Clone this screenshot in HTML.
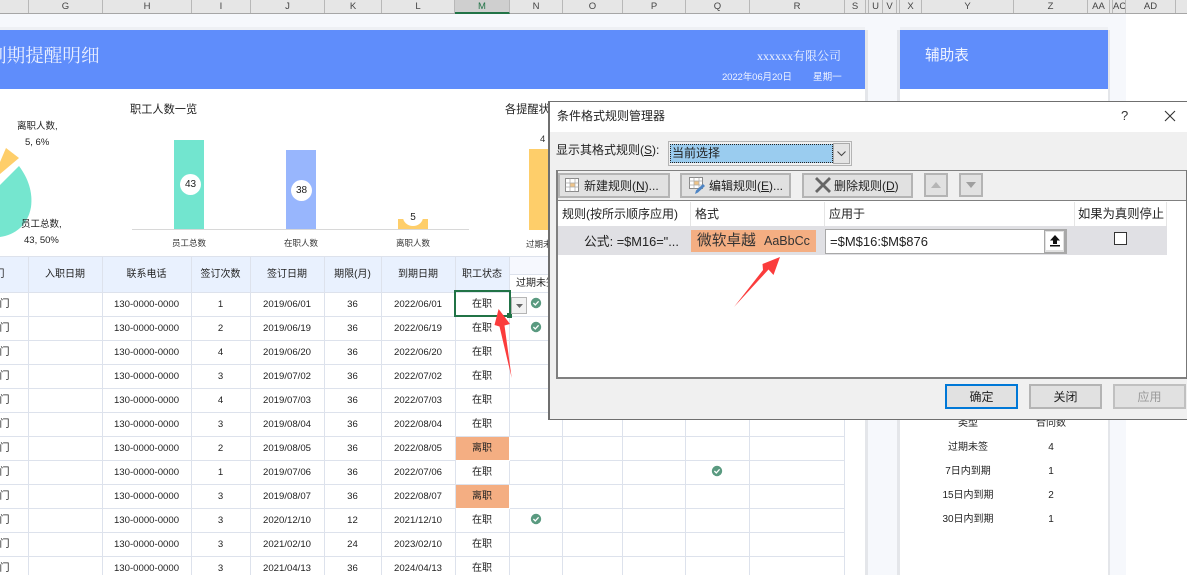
<!DOCTYPE html>
<html><head><meta charset="utf-8">
<style>
html,body{margin:0;padding:0;width:1187px;height:575px;overflow:hidden;background:#fff}
body{position:relative;font-family:"Liberation Sans","Noto Sans CJK SC",sans-serif;color:#222}
.a{position:absolute;white-space:nowrap}
.c{position:absolute;top:0;height:13px;line-height:14px;font-size:9.5px;text-align:center;color:#444;border-right:1px solid #b8b8b8;box-sizing:border-box;overflow:hidden}
table{position:absolute;left:-1px;top:256px;border-collapse:collapse;table-layout:fixed;width:845px;font-size:9.6px;line-height:14px;color:#222}
td{border-right:1px solid #dde2ec;border-bottom:1px solid #dde2ec;height:23px;padding:0;text-align:center;overflow:hidden;white-space:nowrap;box-sizing:content-box}
tr.h td{height:35px;background:#e9f1fe;font-size:10px;border-top:1px solid #dde2ec}
td.f{direction:rtl;text-align:right;padding-right:18px;font-size:10px}
tr.h td.f{padding-right:23px}
td.m{font-size:10px}
td.o{background:#f4ae82;border-bottom:1px solid #fff;border-right:1px solid #fff;font-size:10px}
.aux{font-size:10px;color:#222;text-align:center;transform:translateX(-50%)}
.btn{position:absolute;background:#e1e1e1;border:2px solid #b4b4b4;box-sizing:border-box;font-size:12px;color:#222;text-align:center;white-space:nowrap}
u{text-decoration:underline}
</style></head><body>

<!-- column headers -->
<div class="a" style="left:0;top:0;width:1187px;height:14px;background:#e6e6e6;border-bottom:1px solid #a6a6a6;box-sizing:border-box"></div>
<div class="c" style="left:0;width:29px"></div>
<div class="c" style="left:29px;width:74px">G</div>
<div class="c" style="left:103px;width:89px">H</div>
<div class="c" style="left:192px;width:59px">I</div>
<div class="c" style="left:251px;width:74px">J</div>
<div class="c" style="left:325px;width:57px">K</div>
<div class="c" style="left:382px;width:73px">L</div>
<div class="c" style="left:455px;width:55px;background:#cfcfcf;border-bottom:2px solid #217346;color:#217346;height:14px">M</div>
<div class="c" style="left:510px;width:53px">N</div>
<div class="c" style="left:563px;width:60px">O</div>
<div class="c" style="left:623px;width:63px">P</div>
<div class="c" style="left:686px;width:64px">Q</div>
<div class="c" style="left:750px;width:95px">R</div>
<div class="c" style="left:845px;width:21px">S</div>
<div class="c" style="left:866px;width:3px"></div>
<div class="c" style="left:869px;width:14px">U</div>
<div class="c" style="left:883px;width:14px">V</div>
<div class="c" style="left:897px;width:3px"></div>
<div class="c" style="left:900px;width:22px">X</div>
<div class="c" style="left:922px;width:92px">Y</div>
<div class="c" style="left:1014px;width:74px">Z</div>
<div class="c" style="left:1088px;width:22px">AA</div>
<div class="c" style="left:1110px;width:3px"></div>
<div class="c" style="left:1113px;width:13px">AC</div>
<div class="c" style="left:1126px;width:50px">AD</div>

<!-- page background -->
<div class="a" style="left:0;top:14px;width:1126px;height:561px;background:#f6f8fc"></div>
<div class="a" style="left:0;top:27px;width:865px;height:3px;background:#eef0f4"></div>
<div class="a" style="left:900px;top:27px;width:208px;height:3px;background:#eef0f4"></div>
<div class="a" style="left:0;top:89px;width:865px;height:486px;background:#fff"></div>
<div class="a" style="left:865px;top:30px;width:3px;height:545px;background:#e4e6ea"></div>
<div class="a" style="left:897px;top:30px;width:3px;height:545px;background:#e4e6ea"></div>
<div class="a" style="left:900px;top:89px;width:208px;height:486px;background:#fff"></div>
<div class="a" style="left:1108px;top:30px;width:2px;height:545px;background:#e4e6ea"></div>

<!-- banners -->
<div class="a" style="left:0;top:30px;width:865px;height:59px;background:#5f8dfb"></div>
<div class="a" style="left:900px;top:30px;width:208px;height:59px;background:#5f8dfb"></div>
<div class="a" style="left:-12px;top:42px;font:18.6px/30px 'Liberation Serif','Noto Serif CJK SC',serif;color:#e8eeff">到期提醒明细</div>
<div class="a" style="left:757px;top:47px;font:12px/18px 'Liberation Serif','Noto Serif CJK SC',serif;color:#f0f4ff">xxxxxx有限公司</div>
<div class="a" style="left:722px;top:70px;font-size:9.6px;letter-spacing:-.15px;line-height:15px;color:#eef2ff">2022年06月20日</div>
<div class="a" style="left:813px;top:70px;font-size:9.6px;line-height:15px;color:#eef2ff">星期一</div>
<div class="a" style="left:925px;top:46px;font-size:14.6px;line-height:21px;color:#f0f4ff">辅助表</div>

<!-- charts -->
<div class="a" style="left:130px;top:102px;font-size:11.2px;line-height:16px;color:#222">职工人数一览</div>
<div class="a" style="left:505px;top:102px;font-size:11.2px;line-height:16px;color:#222">各提醒状态</div>
<svg class="a" style="left:0;top:110px" width="70" height="140">
<path d="M0 52 L6 38 L19 48 L0 64Z" fill="#fece6a"/>
<path d="M0 75 L19 56 C28 68 33 82 31 97 C28 115 15 125 0 127Z" fill="#75e6cf"/>
</svg>
<div class="a" style="left:17px;top:120px;font-size:9.5px;line-height:14px;color:#222">离职人数,</div>
<div class="a" style="left:25px;top:136px;font-size:9.5px;line-height:14px;color:#222">5, 6%</div>
<div class="a" style="left:21px;top:218px;font-size:9.5px;line-height:14px;color:#222">员工总数,</div>
<div class="a" style="left:24px;top:234px;font-size:9.5px;line-height:14px;color:#222">43, 50%</div>
<div class="a" style="left:174px;top:140px;width:30px;height:89px;background:#72e5cf"></div>
<div class="a" style="left:286px;top:150px;width:30px;height:79px;background:#98b6fd"></div>
<div class="a" style="left:398px;top:219px;width:30px;height:10px;background:#fece6a"></div>
<div class="a" style="left:529px;top:149px;width:20px;height:81px;background:#fece6a"></div>
<div class="a" style="left:180px;top:174px;width:21px;height:21px;border-radius:50%;background:#fff;text-align:center;font-size:10px;line-height:21px">43</div>
<div class="a" style="left:291px;top:180px;width:21px;height:21px;border-radius:50%;background:#fff;text-align:center;font-size:10px;line-height:21px">38</div>
<div class="a" style="left:403px;top:208px;width:20px;height:18px;border-radius:50%;background:#fff;text-align:center;font-size:10px;line-height:20px">5</div>
<div class="a" style="left:132px;top:229px;width:337px;height:1px;background:#d8d8d8"></div>
<div class="a" style="left:172px;top:236px;font-size:8.5px;line-height:14px;color:#333">员工总数</div>
<div class="a" style="left:284px;top:236px;font-size:8.5px;line-height:14px;color:#333">在职人数</div>
<div class="a" style="left:396px;top:236px;font-size:8.5px;line-height:14px;color:#333">离职人数</div>
<div class="a" style="left:526px;top:237px;font-size:8.5px;line-height:14px;color:#333">过期未签</div>
<div class="a" style="left:540px;top:133px;font-size:9.5px;line-height:13px;color:#333">4</div>

<!-- table -->
<table>
<colgroup><col style="width:29px"><col style="width:74px"><col style="width:89px"><col style="width:59px"><col style="width:74px"><col style="width:57px"><col style="width:74px"><col style="width:54px"><col style="width:53px"><col style="width:60px"><col style="width:63px"><col style="width:64px"><col style="width:95px"></colgroup>
<tr class="h"><td class="f">部门</td><td>入职日期</td><td>联系电话</td><td>签订次数</td><td>签订日期</td><td>期限(月)</td><td>到期日期</td><td>职工状态</td><td style="background:#f6f8fe" colspan="5"></td></tr>
<tr><td class="f">部门</td><td></td><td>130-0000-0000</td><td>1</td><td>2019/06/01</td><td>36</td><td>2022/06/01</td><td class="m">在职</td><td></td><td></td><td></td><td></td><td></td></tr>
<tr><td class="f">部门</td><td></td><td>130-0000-0000</td><td>2</td><td>2019/06/19</td><td>36</td><td>2022/06/19</td><td class="m">在职</td><td></td><td></td><td></td><td></td><td></td></tr>
<tr><td class="f">部门</td><td></td><td>130-0000-0000</td><td>4</td><td>2019/06/20</td><td>36</td><td>2022/06/20</td><td class="m">在职</td><td></td><td></td><td></td><td></td><td></td></tr>
<tr><td class="f">部门</td><td></td><td>130-0000-0000</td><td>3</td><td>2019/07/02</td><td>36</td><td>2022/07/02</td><td class="m">在职</td><td></td><td></td><td></td><td></td><td></td></tr>
<tr><td class="f">部门</td><td></td><td>130-0000-0000</td><td>4</td><td>2019/07/03</td><td>36</td><td>2022/07/03</td><td class="m">在职</td><td></td><td></td><td></td><td></td><td></td></tr>
<tr><td class="f">部门</td><td></td><td>130-0000-0000</td><td>3</td><td>2019/08/04</td><td>36</td><td>2022/08/04</td><td class="m">在职</td><td></td><td></td><td></td><td></td><td></td></tr>
<tr><td class="f">部门</td><td></td><td>130-0000-0000</td><td>2</td><td>2019/08/05</td><td>36</td><td>2022/08/05</td><td class="o">离职</td><td></td><td></td><td></td><td></td><td></td></tr>
<tr><td class="f">部门</td><td></td><td>130-0000-0000</td><td>1</td><td>2019/07/06</td><td>36</td><td>2022/07/06</td><td class="m">在职</td><td></td><td></td><td></td><td></td><td></td></tr>
<tr><td class="f">部门</td><td></td><td>130-0000-0000</td><td>3</td><td>2019/08/07</td><td>36</td><td>2022/08/07</td><td class="o">离职</td><td></td><td></td><td></td><td></td><td></td></tr>
<tr><td class="f">部门</td><td></td><td>130-0000-0000</td><td>3</td><td>2020/12/10</td><td>12</td><td>2021/12/10</td><td class="m">在职</td><td></td><td></td><td></td><td></td><td></td></tr>
<tr><td class="f">部门</td><td></td><td>130-0000-0000</td><td>3</td><td>2021/02/10</td><td>24</td><td>2023/02/10</td><td class="m">在职</td><td></td><td></td><td></td><td></td><td></td></tr>
<tr><td class="f">部门</td><td></td><td>130-0000-0000</td><td>3</td><td>2021/04/13</td><td>36</td><td>2024/04/13</td><td class="m">在职</td><td></td><td></td><td></td><td></td><td></td></tr>
</table>
<div class="a" style="left:510px;top:274px;width:60px;height:17px;background:#fff;border-top:1px solid #dde2ec"></div>
<div class="a" style="left:516px;top:277px;font-size:10px;line-height:14px">过期未签</div>

<!-- checks -->
<svg class="a" style="left:530px;top:297px" width="12" height="12"><circle cx="6" cy="6" r="5.200" fill="#5a9a80"/><path d="M3.400 6 L5.300 7.900 L8.600 4.300" fill="none" stroke="#fff" stroke-width="1.300"/></svg>
<svg class="a" style="left:530px;top:321px" width="12" height="12"><circle cx="6" cy="6" r="5.200" fill="#5a9a80"/><path d="M3.400 6 L5.300 7.900 L8.600 4.300" fill="none" stroke="#fff" stroke-width="1.300"/></svg>
<svg class="a" style="left:530px;top:513px" width="12" height="12"><circle cx="6" cy="6" r="5.200" fill="#5a9a80"/><path d="M3.400 6 L5.300 7.900 L8.600 4.300" fill="none" stroke="#fff" stroke-width="1.300"/></svg>
<svg class="a" style="left:711px;top:465px" width="12" height="12"><circle cx="6" cy="6" r="5.200" fill="#5a9a80"/><path d="M3.400 6 L5.300 7.900 L8.600 4.300" fill="none" stroke="#fff" stroke-width="1.300"/></svg>

<!-- selected cell -->
<div class="a" style="left:454px;top:290px;width:57px;height:27px;border:2px solid #217346;box-sizing:border-box"></div>
<div class="a" style="left:507px;top:313px;width:5px;height:5px;background:#217346;border:0"></div>
<div class="a" style="left:511px;top:297px;width:16px;height:17px;background:#f2f2f2;border:1px solid #b5b5b5;box-sizing:border-box"></div>
<svg class="a" style="left:515px;top:303px" width="9" height="6"><path d="M1 1H8L4.500 5Z" fill="#666"/></svg>

<!-- aux table -->
<div class="a aux" style="left:968px;top:417px;line-height:14px">类型</div>
<div class="a aux" style="left:1051px;top:417px;line-height:14px">合同数</div>
<div class="a aux" style="left:968px;top:441px;line-height:14px">过期未签</div>
<div class="a aux" style="left:1051px;top:441px;line-height:14px">4</div>
<div class="a aux" style="left:968px;top:465px;line-height:14px">7日内到期</div>
<div class="a aux" style="left:1051px;top:465px;line-height:14px">1</div>
<div class="a aux" style="left:968px;top:489px;line-height:14px">15日内到期</div>
<div class="a aux" style="left:1051px;top:489px;line-height:14px">2</div>
<div class="a aux" style="left:968px;top:513px;line-height:14px">30日内到期</div>
<div class="a aux" style="left:1051px;top:513px;line-height:14px">1</div>

<!-- dialog -->
<div class="a" style="left:548px;top:101px;width:640px;height:319px;background:#f0f0f0;border:1px solid #6f6f6f;border-left-width:2px;border-right:0;box-sizing:border-box"></div>
<div class="a" style="left:550px;top:102px;width:637px;height:30px;background:#fff"></div>
<div class="a" style="left:557px;top:107px;font-size:12px;line-height:18px;color:#222">条件格式规则管理器</div>
<div class="a" style="left:1121px;top:107px;font-size:13px;line-height:18px;color:#333">?</div>
<svg class="a" style="left:1163px;top:109px" width="14" height="14"><path d="M2 2L12 12M12 2L2 12" stroke="#333" stroke-width="1.100" fill="none"/></svg>
<div class="a" style="left:556px;top:141px;font-size:12px;line-height:18px;color:#222">显示其格式规则(<u>S</u>):</div>
<div class="a" style="left:668px;top:141px;width:184px;height:25px;background:#f0f0f0;border:1px solid #b4b4b4;box-sizing:border-box"></div>
<div class="a" style="left:670px;top:144px;width:163px;height:19px;background:#9accef;border:1px dotted #222;box-sizing:border-box;font-size:12px;line-height:17px;padding-left:1px;color:#222">当前选择</div>
<div class="a" style="left:833px;top:143px;width:17px;height:21px;background:#e4e4e4;border:1px solid #aaa;box-sizing:border-box"></div>
<svg class="a" style="left:836px;top:150px" width="11" height="8"><path d="M1.500 1.500L5.500 5.500L9.500 1.500" stroke="#444" fill="none"/></svg>

<div class="a" style="left:556px;top:170px;width:631px;height:209px;border:1px solid #808080;border-left-width:2px;border-bottom-width:2px;border-right:0;box-sizing:border-box;background:#f0f0f0"></div>
<div class="a" style="left:556px;top:200px;width:631px;height:1px;background:#808080"></div>
<div class="a" style="left:558px;top:201px;width:628px;height:176px;background:#fff"></div>
<div class="a" style="left:1186px;top:170px;width:1px;height:209px;background:#777"></div>

<div class="btn" style="left:558px;top:173px;width:112px;height:25px;line-height:22px;padding-left:24px;text-align:left">新建规则(<u>N</u>)...</div>
<svg class="a" style="left:565px;top:178px" width="15" height="15"><rect x=".5" y=".5" width="13" height="13" fill="#fff" stroke="#8a8a8a"/><rect x="5" y="5" width="5" height="4" fill="#eec48a"/><path d="M.5 5H13.500M.5 9H13.500M5 .5V13.500M10 .5V13.500" stroke="#a8a8a8" stroke-width=".7"/></svg>
<div class="btn" style="left:680px;top:173px;width:111px;height:25px;line-height:22px;padding-left:27px;text-align:left">编辑规则(<u>E</u>)...</div>
<svg class="a" style="left:689px;top:177px" width="18" height="18"><rect x=".5" y=".5" width="13" height="11" fill="#fff" stroke="#8a8a8a"/><rect x="5" y="4" width="5" height="4" fill="#eec48a"/><path d="M.5 4H13.500M.5 8H13.500M5 .5V11.500M10 .5V11.500" stroke="#a8a8a8" stroke-width=".7"/><path d="M6 17L7 13.500L14 7L16 9L9 15.500Z" fill="#4d84c4"/></svg>
<div class="btn" style="left:802px;top:173px;width:111px;height:25px;line-height:22px;padding-left:30px;text-align:left">删除规则(<u>D</u>)</div>
<svg class="a" style="left:814px;top:176px" width="18" height="18"><path d="M2 2L16 16M16 2L2 16" stroke="#666" stroke-width="2.800" fill="none"/></svg>
<div class="btn" style="left:924px;top:173px;width:24px;height:24px"></div>
<svg class="a" style="left:930px;top:181px" width="12" height="8"><path d="M1 7H11L6 1Z" fill="#b5b5b5"/></svg>
<div class="btn" style="left:959px;top:173px;width:24px;height:24px"></div>
<svg class="a" style="left:965px;top:181px" width="12" height="8"><path d="M1 1H11L6 7Z" fill="#9f9f9f"/></svg>

<div class="a" style="left:562px;top:205px;font-size:12px;line-height:18px;color:#222">规则(按所示顺序应用)</div>
<div class="a" style="left:695px;top:205px;font-size:12px;line-height:18px;color:#222">格式</div>
<div class="a" style="left:829px;top:205px;font-size:12px;line-height:18px;color:#222">应用于</div>
<div class="a" style="left:1078px;top:205px;font-size:12.300px;line-height:18px;color:#222">如果为真则停止</div>
<div class="a" style="left:690px;top:202px;width:1px;height:24px;background:#e5e5e5"></div>
<div class="a" style="left:824px;top:202px;width:1px;height:24px;background:#e5e5e5"></div>
<div class="a" style="left:1074px;top:202px;width:1px;height:24px;background:#e5e5e5"></div>
<div class="a" style="left:1166px;top:202px;width:1px;height:24px;background:#e5e5e5"></div>

<div class="a" style="left:558px;top:226px;width:609px;height:29px;background:#e0e0e4"></div>
<div class="a" style="left:584px;top:233px;font-size:12.800px;line-height:17px;color:#222">公式: =$M16="...</div>
<div class="a" style="left:691px;top:230px;width:125px;height:22px;background:#f4ae82"></div>
<div class="a" style="left:697px;top:231px;font-size:14.700px;line-height:20px;color:#333">微软卓越</div>
<div class="a" style="left:764px;top:231px;font-size:12.500px;line-height:20px;color:#333">AaBbCc</div>
<div class="a" style="left:825px;top:229px;width:242px;height:25px;background:#fff;border:1px solid #a8a8a8;box-sizing:border-box;font-size:13px;line-height:23px;padding-left:4px;color:#222">=$M$16:$M$876</div>
<div class="a" style="left:1044px;top:229px;width:23px;height:25px;background:#a8a8a8"></div>
<div class="a" style="left:1045px;top:231px;width:19px;height:21px;background:#e1e1e1"></div>
<div class="a" style="left:1046px;top:232px;width:17px;height:18px;background:#fff"></div>
<svg class="a" style="left:1048px;top:234px" width="14" height="14"><path d="M7 1L12 6.500H9V10H5V6.500H2Z" fill="#111"/><rect x="2" y="11" width="10" height="1.500" fill="#111"/></svg>
<div class="a" style="left:1114px;top:232px;width:13px;height:13px;background:#fff;border:1px solid #333;box-sizing:border-box"></div>

<div class="btn" style="left:945px;top:384px;width:73px;height:25px;border:2px solid #0078d7;line-height:22px">确定</div>
<div class="btn" style="left:1029px;top:384px;width:73px;height:25px;line-height:22px">关闭</div>
<div class="btn" style="left:1113px;top:384px;width:73px;height:25px;line-height:22px;color:#9a9a9a;border-color:#c0c0c0">应用</div>

<!-- arrows -->
<svg class="a" style="left:0;top:0" width="1187" height="575">
<path d="M780 257L773.500 275L768.500 269.500L734 307L763 270L762.500 264Z" fill="#fb3c3c"/>
<path d="M498.600 309L510 324L504.500 325.500L511.700 378L499.500 326.500L494.500 325Z" fill="#fb3c3c"/>
</svg>
</body></html>
